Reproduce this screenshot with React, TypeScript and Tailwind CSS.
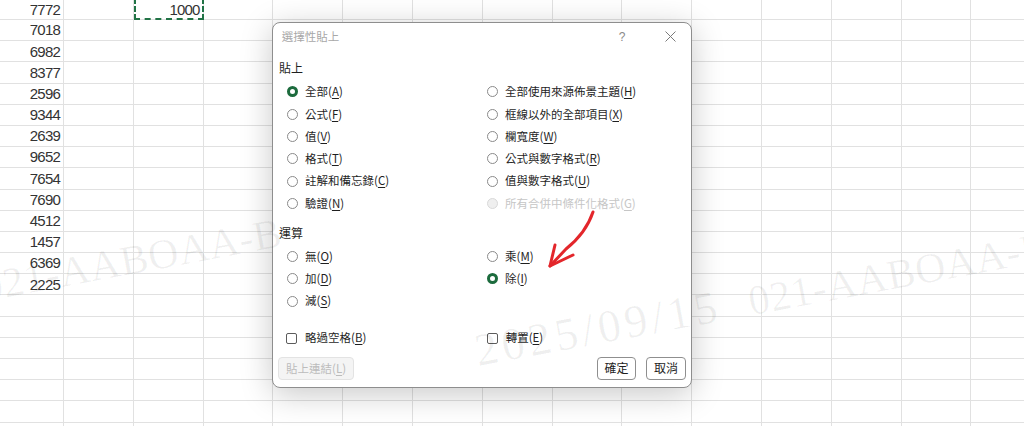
import React from 'react';

const nums = ['7772', '7018', '6982', '8377', '2596', '9344', '2639', '9652', '7654', '7690', '4512', '1457', '6369', '2225'];

const cjk = "font-['Noto_Sans_CJK_TC','Noto_Sans',sans-serif]";

type Opt = { label: string; k: string; checked?: boolean; disabled?: boolean } | null;

const pasteRows: [Opt, Opt][] = [
  [{ label: '全部', k: 'A', checked: true }, { label: '全部使用來源佈景主題', k: 'H' }],
  [{ label: '公式', k: 'F' }, { label: '框線以外的全部項目', k: 'X' }],
  [{ label: '值', k: 'V' }, { label: '欄寬度', k: 'W' }],
  [{ label: '格式', k: 'T' }, { label: '公式與數字格式', k: 'R' }],
  [{ label: '註解和備忘錄', k: 'C' }, { label: '值與數字格式', k: 'U' }],
  [{ label: '驗證', k: 'N' }, { label: '所有合併中條件化格式', k: 'G', disabled: true }],
];

const opRows: [Opt, Opt][] = [
  [{ label: '無', k: 'O' }, { label: '乘', k: 'M' }],
  [{ label: '加', k: 'D' }, { label: '除', k: 'I', checked: true }],
  [{ label: '減', k: 'S' }, null],
];

const Label = ({ label, k, disabled }: { label: string; k: string; disabled?: boolean }) => (
  <span className={`text-[11.5px] leading-none whitespace-nowrap ${disabled ? 'text-[#c6c6c6]' : 'text-[#1f1f1f]'}`}>
    {label}(<span className="underline underline-offset-2">{k}</span>)
  </span>
);

const Radio = ({ checked, disabled }: { checked?: boolean; disabled?: boolean }) => {
  if (checked) return <span className="w-[11px] h-[11px] shrink-0 rounded-full border-[3px] border-[#1c6b3d] bg-white" />;
  if (disabled) return <span className="w-[11px] h-[11px] shrink-0 rounded-full border border-[#d9d9d9] bg-[#efefef]" />;
  return <span className="w-[11px] h-[11px] shrink-0 rounded-full border border-[#8a8a8a] bg-white" />;
};

const OptionCell = ({ opt }: { opt: Opt }) => (
  <div className="h-[22.3px] flex items-center gap-[7.5px]">
    {opt && (
      <>
        <Radio checked={opt.checked} disabled={opt.disabled} />
        <Label label={opt.label} k={opt.k} disabled={opt.disabled} />
      </>
    )}
  </div>
);

const Sheet = () => (
  <div className="flex flex-col">
    {Array.from({ length: 21 }).map((_, r) => (
      <div key={r} className={`flex shrink-0 ${r === 0 ? 'h-[20px]' : 'h-[21.2px]'}`}>
        {Array.from({ length: 15 }).map((__, c) => (
          <div
            key={c}
            className={`shrink-0 border-r border-b border-[#e1e1e1] flex items-center justify-end pr-[3px] pt-[1px] font-['Liberation_Sans',sans-serif] text-[15px] tracking-[-0.8px] text-[#333] ${
              c === 0 ? 'w-[64px]' : 'w-[69.8px]'
            }`}
          >
            {c === 0 && r < nums.length ? nums[r] : c === 2 && r === 0 ? '1000' : ''}
          </div>
        ))}
      </div>
    ))}
  </div>
);

const Watermark = ({ pos }: { pos: string }) => (
  <div className={`absolute origin-[0_38px] -rotate-[10.5deg] flex items-baseline ${pos}`}>
    <span className="inline-block w-[278px] text-[46px] tracking-[4px]">2025/09/15</span>
    <span className="text-[42px] tracking-[0.5px]">021-AABOAA-B</span>
  </div>
);

export default function App() {
  return (
    <div className="relative w-[1024px] h-[426px] overflow-hidden bg-white">
      <Sheet />

      {/* copy marquee on C1 */}
      <div className="absolute left-[134px] top-[-2px] w-[70px] h-[22px] border-2 border-dashed border-[#217346]" />

      {/* Paste Special dialog */}
      <div
        className={`absolute left-[272px] top-[22px] w-[420px] h-[366px] flex flex-col bg-white border border-[#8e8e8e] rounded-[8px] shadow-[0_6px_32px_rgba(0,0,0,0.22)] ${cjk}`}
      >
        <div className="h-[27px] flex items-center pl-[8.7px] pr-[15.5px]">
          <span className="text-[11.5px] text-[#a8a8a8] leading-none">選擇性貼上</span>
          <span className="ml-auto text-[12px] text-[#8a8a8a] font-['Liberation_Sans',sans-serif] leading-none">?</span>
          <svg className="ml-[39px]" width="11" height="11" viewBox="0 0 11 11">
            <path d="M0.5 0.5 L10.5 10.5 M10.5 0.5 L0.5 10.5" stroke="#7a7a7a" strokeWidth="1" fill="none" />
          </svg>
        </div>

        <div className="flex flex-col pl-[6px] pr-[5px]">
          <div className="mt-[10px] h-[16px] flex items-center text-[12px] text-[#1f1f1f] leading-none">貼上</div>
          <div className="mt-[4.85px] grid grid-cols-[200px_1fr] pl-[7.5px]">
            {pasteRows.map(([a, b], i) => (
              <React.Fragment key={i}>
                <OptionCell opt={a} />
                <OptionCell opt={b} />
              </React.Fragment>
            ))}
          </div>

          <div className="mt-[10.35px] h-[16px] flex items-center text-[12px] text-[#1f1f1f] leading-none">運算</div>
          <div className="mt-[4.5px] grid grid-cols-[200px_1fr] pl-[7.5px]">
            {opRows.map(([a, b], i) => (
              <React.Fragment key={i}>
                <OptionCell opt={a} />
                <OptionCell opt={b} />
              </React.Fragment>
            ))}
          </div>

          <div className="mt-[14.7px] grid grid-cols-[200px_1fr] pl-[7px]">
            <div className="h-[22.3px] flex items-center gap-[8px]">
              <span className="w-[11px] h-[11px] shrink-0 rounded-[2px] border border-[#5c5c5c] bg-white" />
              <Label label="略過空格" k="B" />
            </div>
            <div className="h-[22.3px] flex items-center gap-[8px] pl-[0.7px]">
              <span className="w-[11px] h-[11px] shrink-0 rounded-[2px] border border-[#5c5c5c] bg-white" />
              <Label label="轉置" k="E" />
            </div>
          </div>

          <div className="mt-[7.5px] flex items-center">
            <button className="h-[23px] w-[76px] -ml-[1px] rounded-[4px] border border-[#e3e3e3] bg-[#f4f4f4] text-[11.5px] text-[#bcbcbc] leading-none">
              貼上連結(<span className="underline underline-offset-2">L</span>)
            </button>
            <button className="ml-auto h-[23px] w-[39px] rounded-[4px] border border-[#8f8f8f] bg-white text-[12px] text-[#1f1f1f] leading-none">
              確定
            </button>
            <button className="ml-[10px] h-[23px] w-[40px] rounded-[4px] border border-[#8f8f8f] bg-white text-[12px] text-[#1f1f1f] leading-none">
              取消
            </button>
          </div>
        </div>
      </div>

      {/* watermark */}
      <div className="absolute inset-0 pointer-events-none font-['Liberation_Serif',serif] leading-none text-black/[0.06] whitespace-nowrap">
        <Watermark pos="left-[-289px] top-[314px]" />
        <Watermark pos="left-[478px] top-[328px]" />
      </div>

      {/* red annotation arrow */}
      <svg className="absolute left-0 top-0 pointer-events-none" width="1024" height="426" viewBox="0 0 1024 426">
        <path d="M593 212 Q586 233 566 249 L550 266" stroke="#e3262b" strokeWidth="3" fill="none" strokeLinecap="round" strokeLinejoin="round" />
        <path d="M555 245 L550 266 L573 255" stroke="#e3262b" strokeWidth="3" fill="none" strokeLinecap="round" strokeLinejoin="round" />
      </svg>
    </div>
  );
}
